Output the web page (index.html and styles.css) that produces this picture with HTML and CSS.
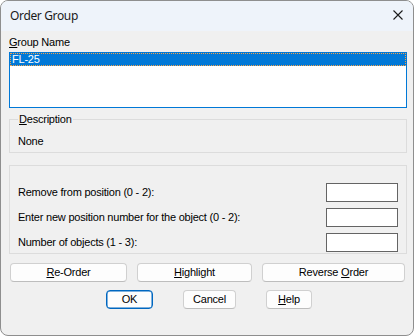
FILE: index.html
```html
<!DOCTYPE html>
<html lang="en">
<head>
    <meta charset="UTF-8">
    <meta name="viewport" content="width=device-width, initial-scale=1.0">
    <title>Order Group</title>
    <link rel="stylesheet" href="styles.css">
</head>
<body>
    <div class="dialog">
        <div class="titlebar">
            <span class="title">Order Group</span>
            <svg class="close" width="10" height="10" viewBox="0 0 10 10">
                <path d="M0.5 0.5 L9.5 9.5 M9.5 0.5 L0.5 9.5" stroke="#1b1b1b" stroke-width="1.1" fill="none"/>
            </svg>
        </div>

        <div class="content">
            <div class="label"><u>G</u>roup Name</div>
            <div class="listbox">
                <div class="list-item selected">FL-25</div>
            </div>

            <fieldset class="group desc">
                <legend><u>D</u>escription</legend>
                <div>None</div>
            </fieldset>

            <div class="group fields">
                <div class="field-row">
                    <span>Remove from position (0 - 2):</span>
                    <input type="text">
                </div>
                <div class="field-row">
                    <span>Enter new position number for the object (0 - 2):</span>
                    <input type="text">
                </div>
                <div class="field-row">
                    <span>Number of objects (1 - 3):</span>
                    <input type="text">
                </div>
            </div>

            <div class="button-row actions">
                <button class="btn btn-reorder"><u>R</u>e-Order</button>
                <button class="btn btn-highlight"><u>H</u>ighlight</button>
                <button class="btn btn-reverse">Reverse <u>O</u>rder</button>
            </div>

            <div class="button-row dialog-buttons">
                <button class="btn btn-ok default">OK</button>
                <button class="btn btn-cancel">Cancel</button>
                <button class="btn btn-help"><u>H</u>elp</button>
            </div>
        </div>
    </div>
</body>
</html>
```

FILE: styles.css
```css
body {
    margin: 0;
    background: #ffffff;
}
.dialog {
    width: 414px;
    height: 336px;
    box-sizing: border-box;
    border: 1px solid #8e8e8e;
    border-radius: 8px;
    background: #f0f0f0;
    overflow: hidden;
    font-family: "Liberation Sans", Arial, sans-serif;
    font-size: 11px;
    line-height: 13px;
    letter-spacing: -0.22px;
    color: #000;
}
.titlebar {
    height: 30px;
    display: flex;
    align-items: center;
    justify-content: space-between;
    padding: 0 10px 0 9px;
    background: #eef3fa;
}
.title {
    font-family: "Noto Sans", "Open Sans", sans-serif;
    font-size: 12px;
    letter-spacing: -0.35px;
    color: #1a1a1a;
    margin-bottom: 1px;
}
.close {
    margin-bottom: 2px;
}
.content {
    padding: 5px 6px 0 8px;
}
.label {
    height: 13px;
}
.listbox {
    margin-top: 3px;
    height: 54px;
    border: 1px solid #0078d7;
    background: #fff;
}
.list-item {
    height: 13px;
    padding-left: 2px;
}
.selected {
    background: #0078d7;
    color: #fff;
    outline: 1px dotted #f2a24a;
    outline-offset: -1px;
}
.group {
    margin: 0;
    border: 1px solid #dcdcdc;
}
.desc {
    margin-top: 5px;
    padding: 9px 8px 4px 8px;
}
.desc legend {
    padding: 0 1px;
    margin-left: 0;
    height: 13px;
}
.fields {
    margin-top: 12px;
    padding: 17px 8px 1px 8px;
    display: flex;
    flex-direction: column;
    gap: 6px;
}
.field-row {
    display: flex;
    align-items: center;
    justify-content: space-between;
    height: 19px;
}
.field-row input {
    width: 72px;
    height: 19px;
    box-sizing: border-box;
    border: 1px solid #646464;
    background: #fff;
    padding: 0 2px;
    margin: 0;
    font: inherit;
}
.button-row {
    display: flex;
}
.actions {
    margin-top: 9px;
    padding-left: 1px;
    gap: 10px;
}
.dialog-buttons {
    margin-top: 8px;
    justify-content: center;
    gap: 30px;
    padding-left: 2px;
}
.btn {
    height: 19px;
    box-sizing: border-box;
    padding: 0;
    border: 1px solid #d0d0d0;
    border-bottom-color: #bdbdbd;
    border-radius: 4px;
    background: #fdfdfd;
    font: inherit;
    letter-spacing: inherit;
    color: #000;
}
.btn-reorder { width: 117px; }
.btn-highlight { width: 115px; }
.btn-reverse { width: 143px; }
.btn-ok { width: 47px; }
.btn-cancel { width: 53px; }
.btn-help { width: 46px; }
.default {
    border: 1px solid #0067c0;
    box-shadow: inset 0 0 0 0.5px #0067c0;
}
```
